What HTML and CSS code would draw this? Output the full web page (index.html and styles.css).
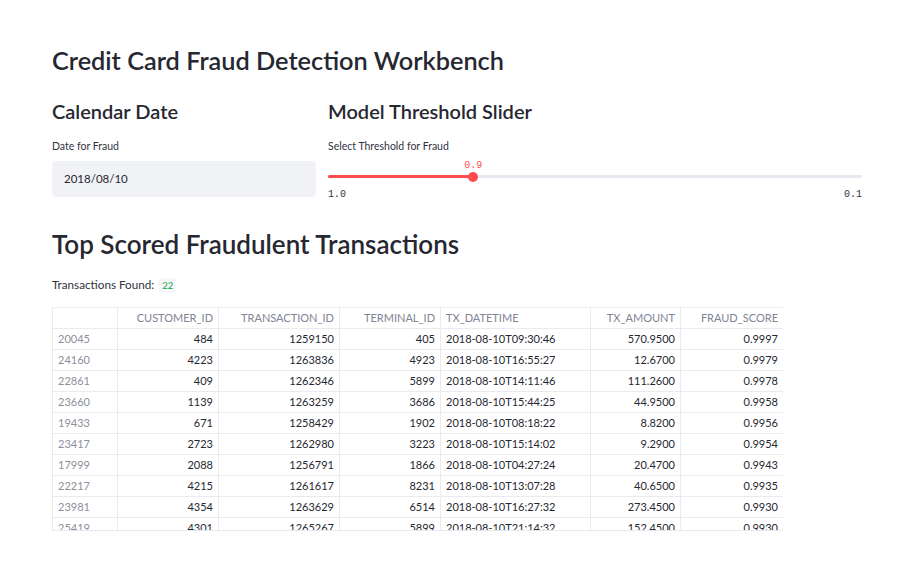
FILE: index.html
```html
<!DOCTYPE html>
<html>
<head>
<meta charset="utf-8">
<link rel="stylesheet" href="styles.css">
</head>
<body>
<main class="page">
  <h1 class="title">Credit Card Fraud Detection Workbench</h1>
  <div class="cols">
    <section class="col col-left">
      <h2 class="subhead">Calendar Date</h2>
      <label class="label">Date for Fraud</label>
      <div class="date-input">2018/08/10</div>
    </section>
    <section class="col col-right">
      <h2 class="subhead">Model Threshold Slider</h2>
      <label class="label">Select Threshold for Fraud</label>
      <div class="slider">
        <div class="slider-value"><span class="val">0.9</span></div>
        <div class="track"><div class="fill" style="width:27.2%"></div><div class="thumb" style="left:27.2%"></div></div>
        <div class="ticks"><span>1.0</span><span>0.1</span></div>
      </div>
    </section>
  </div>
  <h2 class="section-title">Top Scored Fraudulent Transactions</h2>
  <p class="found">Transactions Found: <code class="badge">22</code></p>
  <div class="table-wrap">
    <table class="grid">
      <colgroup>
        <col class="c-idx"><col class="c-cust"><col class="c-tx"><col class="c-term"><col class="c-dt"><col class="c-amt"><col class="c-score">
      </colgroup>
      <thead>
        <tr><th></th><th>CUSTOMER_ID</th><th>TRANSACTION_ID</th><th>TERMINAL_ID</th><th class="left">TX_DATETIME</th><th>TX_AMOUNT</th><th>FRAUD_SCORE</th></tr>
      </thead>
      <tbody>
        <tr><td class="idx">20045</td><td>484</td><td>1259150</td><td>405</td><td class="left">2018-08-10T09:30:46</td><td>570.9500</td><td>0.9997</td></tr>
        <tr><td class="idx">24160</td><td>4223</td><td>1263836</td><td>4923</td><td class="left">2018-08-10T16:55:27</td><td>12.6700</td><td>0.9979</td></tr>
        <tr><td class="idx">22861</td><td>409</td><td>1262346</td><td>5899</td><td class="left">2018-08-10T14:11:46</td><td>111.2600</td><td>0.9978</td></tr>
        <tr><td class="idx">23660</td><td>1139</td><td>1263259</td><td>3686</td><td class="left">2018-08-10T15:44:25</td><td>44.9500</td><td>0.9958</td></tr>
        <tr><td class="idx">19433</td><td>671</td><td>1258429</td><td>1902</td><td class="left">2018-08-10T08:18:22</td><td>8.8200</td><td>0.9956</td></tr>
        <tr><td class="idx">23417</td><td>2723</td><td>1262980</td><td>3223</td><td class="left">2018-08-10T15:14:02</td><td>9.2900</td><td>0.9954</td></tr>
        <tr><td class="idx">17999</td><td>2088</td><td>1256791</td><td>1866</td><td class="left">2018-08-10T04:27:24</td><td>20.4700</td><td>0.9943</td></tr>
        <tr><td class="idx">22217</td><td>4215</td><td>1261617</td><td>8231</td><td class="left">2018-08-10T13:07:28</td><td>40.6500</td><td>0.9935</td></tr>
        <tr><td class="idx">23981</td><td>4354</td><td>1263629</td><td>6514</td><td class="left">2018-08-10T16:27:32</td><td>273.4500</td><td>0.9930</td></tr>
        <tr><td class="idx">25419</td><td>4301</td><td>1265267</td><td>5899</td><td class="left">2018-08-10T21:14:32</td><td>152.4500</td><td>0.9930</td></tr>
        <tr><td class="idx">21002</td><td>3301</td><td>1260447</td><td>7712</td><td class="left">2018-08-10T11:02:19</td><td>98.1200</td><td>0.9921</td></tr>
      </tbody>
    </table>
  </div>
</main>
</body>
</html>
```
FILE: styles.css
```css
* { box-sizing: border-box; }
html, body { margin: 0; padding: 0; background: #ffffff; }
body {
  font-family: "Lato", "Noto Sans", sans-serif;
  color: #262730;
  width: 900px;
  height: 570px;
  overflow: hidden;
}
.page {
  padding: 40px 38px 0 52px;
}
.title {
  margin: 0;
  font-size: 25.3px;
  font-weight: 600;
  line-height: 40px;
  color: #262730;
}
.cols {
  display: flex;
  gap: 12px;
  margin-top: 16px;
}
.col-left { width: 264px; }
.col-right { flex: 1; }
.subhead {
  margin: 0;
  font-size: 20px;
  font-weight: 600;
  line-height: 30px;
  color: #262730;
}
.label {
  display: block;
  margin-top: 13px;
  font-size: 10.5px;
  line-height: 15px;
  color: #31333f;
}
.date-input {
  margin-top: 7px;
  height: 36px;
  background: #f0f2f6;
  border-radius: 4px;
  padding: 0 12px;
  font-size: 11.5px;
  line-height: 36px;
  color: #262730;
}
.slider { position: relative; margin-top: 5px; }
.slider-value {
  position: relative;
  height: 14px;
}
.val {
  position: absolute;
  left: 27.2%;
  transform: translateX(-50%);
  top: 0;
  font-family: "Liberation Mono", "DejaVu Sans Mono", monospace;
  font-size: 10px;
  color: #ff4b4b;
  line-height: 14px;
}
.track {
  position: relative;
  height: 3px;
  margin-top: 2px;
  background: #e6e9ef;
  border-radius: 2px;
}
.fill {
  height: 3px;
  background: #ff4b4b;
  border-radius: 2px;
}
.thumb {
  position: absolute;
  top: -3.5px;
  width: 10px;
  height: 10px;
  margin-left: -5px;
  border-radius: 50%;
  background: #ff4b4b;
}
.ticks {
  display: flex;
  justify-content: space-between;
  margin-top: 10px;
  font-family: "Liberation Mono", "DejaVu Sans Mono", monospace;
  font-size: 10px;
  line-height: 14px;
  color: #31333f;
}
.section-title {
  margin: 24px 0 0;
  font-size: 26px;
  font-weight: 600;
  line-height: 36px;
  color: #262730;
}
.found {
  margin: 13px 0 0;
  font-size: 11.7px;
  line-height: 18px;
  color: #31333f;
}
.badge {
  font-family: "Lato", sans-serif;
  font-size: 9.5px;
  color: #09ab3b;
  background: #f4f6f9;
  border-radius: 3px;
  padding: 2px 3px;
  margin-left: 2px;
}
.table-wrap {
  margin-top: 12px;
  width: 731px;
  height: 224px;
  overflow: hidden;
  border-bottom: 1px solid #e6e9ef;
}
.grid {
  border-collapse: collapse;
  table-layout: fixed;
  width: 731px;
  font-size: 11px;
}
.c-idx { width: 65px; }
.c-cust { width: 101px; }
.c-tx { width: 121px; }
.c-term { width: 101px; }
.c-dt { width: 150px; }
.c-amt { width: 90px; }
.c-score { width: 103px; }
.grid th, .grid td {
  border: 1px solid #e9ebf0;
  height: 21px;
  padding: 0 5px;
  text-align: right;
  white-space: nowrap;
  overflow: hidden;
  line-height: 20px;
}
.grid th {
  font-weight: 400;
  color: #808495;
}
.grid td { color: #262730; }
.grid .left { text-align: left; }
.grid td.idx { text-align: left; color: #8c8f9c; }
```
